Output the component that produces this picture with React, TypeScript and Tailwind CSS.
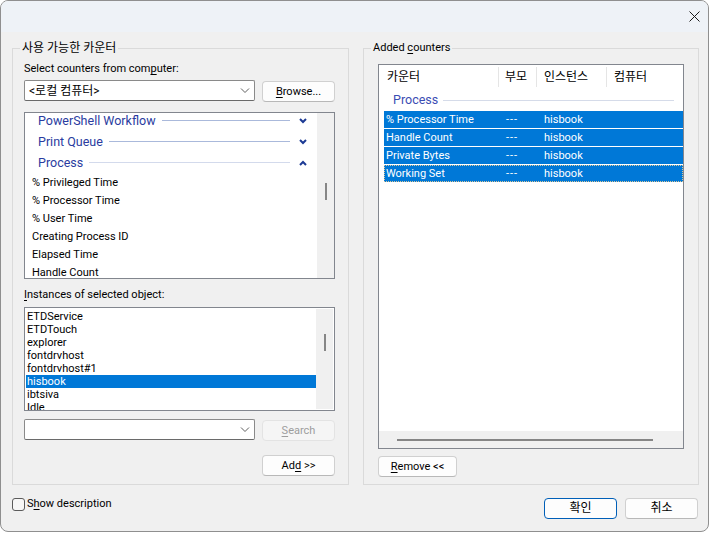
import type { ReactNode } from 'react';

const FONT = "font-['Roboto','Noto_Sans_CJK_KR',sans-serif]";

const GROUPS: Array<{ name: string; open: boolean }> = [
  { name: 'PowerShell Workflow', open: false },
  { name: 'Print Queue', open: false },
  { name: 'Process', open: true },
];

const COUNTERS = [
  '% Privileged Time',
  '% Processor Time',
  '% User Time',
  'Creating Process ID',
  'Elapsed Time',
  'Handle Count',
  'ID Process',
];

const INSTANCES = ['ETDService', 'ETDTouch', 'explorer', 'fontdrvhost', 'fontdrvhost#1', 'hisbook', 'ibtsiva', 'Idle'];

const ADDED = [
  { counter: '% Processor Time', parent: '---', instance: 'hisbook' },
  { counter: 'Handle Count', parent: '---', instance: 'hisbook' },
  { counter: 'Private Bytes', parent: '---', instance: 'hisbook' },
  { counter: 'Working Set', parent: '---', instance: 'hisbook' },
];

function U({ children }: { children: ReactNode }) {
  return <span className="underline underline-offset-[2px] decoration-[1px]">{children}</span>;
}

function DropChevron() {
  return (
    <svg width="10" height="6" viewBox="0 0 10 6" className="shrink-0">
      <polyline points="1,0.5 5,4.5 9,0.5" fill="none" stroke="#5f5f5f" strokeWidth="1" />
    </svg>
  );
}

function GroupChevron({ open }: { open: boolean }) {
  return (
    <svg width="8" height="6" viewBox="0 0 8 6" className="shrink-0">
      <polyline
        points={open ? '1,5 4,2 7,5' : '1,1 4,4 7,1'}
        fill="none"
        stroke="#1c3a94"
        strokeWidth="2"
      />
    </svg>
  );
}

function Combo({ text }: { text?: string }) {
  return (
    <div className="w-[231px] h-[21px] bg-white border border-[#8a8a8a] border-b-[#6a6a6a] rounded-[2px] flex items-center pl-[4px] pr-[4px]">
      <span className="flex-1 text-[12px] leading-[16px] text-black">{text}</span>
      <DropChevron />
    </div>
  );
}

function Button({
  children,
  width = 'w-[73px]',
  disabled,
  primary,
}: {
  children: ReactNode;
  width?: string;
  disabled?: boolean;
  primary?: boolean;
}) {
  return (
    <button
      type="button"
      className={`${width} h-[21px] rounded-[4px] border text-[11px] leading-[16px] flex items-center justify-center ${
        disabled
          ? 'bg-[#f5f5f5] border-[#e3e3e3] text-[#9d9d9d]'
          : primary
            ? 'bg-[#fdfdfd] border-[#005fb8] text-black'
            : 'bg-[#fdfdfd] border-[#d0d0d0] border-b-[#b8b8b8] text-black'
      }`}
    >
      <span>{children}</span>
    </button>
  );
}

function VScroll({ thumbTop }: { thumbTop: string }) {
  return (
    <div className="w-[17px] bg-[#f0f0f0] shrink-0 flex justify-center">
      <div className={`w-[2px] h-[17px] bg-[#868686] ${thumbTop}`} />
    </div>
  );
}

export default function App() {
  return (
    <div className={`w-[710px] h-[533px] bg-white text-[11px] ${FONT}`}>
      <div className="w-[709px] h-[532px] rounded-[8px] border border-[#8f8f8f] bg-[#f0f0f0] overflow-hidden flex flex-col">
        {/* 제목 표시줄 */}
        <div className="h-[31px] bg-[#eef2f7] flex items-center justify-end pr-[8px] shrink-0">
          <svg width="11" height="11" viewBox="0 0 11 11">
            <path d="M0.5 0.5 L10.5 10.5 M10.5 0.5 L0.5 10.5" stroke="#1b1b1b" strokeWidth="1" />
          </svg>
        </div>

        <div className="flex-1 pl-[11px] pr-[9px] pt-[8px]">
          <div className="flex gap-[14px]">
            {/* 사용 가능한 카운터 */}
            <fieldset className="w-[337px] h-[445px] border border-[#dadada] pl-[11px] pr-[13px]">
              <legend className="ml-[-4px] px-[2px] text-[12px] leading-[16px] text-black">사용 가능한 카운터</legend>

              <div className="mt-[5px] leading-[16px] text-black">
                Select counters from com<U>p</U>uter:
              </div>
              <div className="mt-[3px] flex gap-[7px] items-start">
                <Combo text="<로컬 컴퓨터>" />
                <div className="mt-[1px]">
                  <Button>
                    <U>B</U>rowse...
                  </Button>
                </div>
              </div>

              <div className="mt-[10px] h-[167px] border border-[#82868e] bg-white flex overflow-hidden">
                <div className="flex-1 mt-[-3px]">
                  {GROUPS.map((g) => (
                    <div key={g.name} className="h-[21px] flex items-center pl-[13px] pr-[10px]">
                      <span className="text-[12.5px] leading-[16px] text-[#2a3ca0]">{g.name}</span>
                      <div
                        className={`flex-1 h-px ml-[6px] mr-[9px] ${g.open ? 'bg-[#d3daec]' : 'bg-[#aab9db]'}`}
                      />
                      <GroupChevron open={g.open} />
                    </div>
                  ))}
                  <div className="mt-[1px]">
                    {COUNTERS.map((c) => (
                      <div key={c} className="h-[18px] flex items-center pl-[7px] leading-[16px] text-black">
                        {c}
                      </div>
                    ))}
                  </div>
                </div>
                <VScroll thumbTop="mt-[70px]" />
              </div>

              <div className="mt-[8px] leading-[16px] text-black">
                <U>I</U>nstances of selected object:
              </div>
              <div className="mt-[4px] h-[104px] border border-[#82868e] bg-white flex p-px overflow-hidden">
                <div className="flex-1 pt-px">
                  {INSTANCES.map((i) => (
                    <div
                      key={i}
                      className={`h-[13px] flex items-center pl-[1px] leading-[13px] ${
                        i === 'hisbook' ? 'bg-[#0078d7] text-white' : 'text-black'
                      }`}
                    >
                      {i}
                    </div>
                  ))}
                </div>
                <VScroll thumbTop="mt-[25px]" />
              </div>

              <div className="mt-[8px] h-[22px] flex gap-[7px] items-start">
                <Combo />
                <div className="mt-[1px]">
                  <Button disabled>
                    <U>S</U>earch
                  </Button>
                </div>
              </div>

              <div className="mt-[14px] flex justify-end">
                <Button>
                  Ad<U>d</U> &gt;&gt;
                </Button>
              </div>
            </fieldset>

            {/* Added counters */}
            <fieldset className="w-[336px] h-[445px] border border-[#dadada] pl-[14px] pr-[14px]">
              <legend className="ml-[-7px] px-[2px] leading-[16px] text-black">
                Added <U>c</U>ounters
              </legend>

              <div className="mt-[8px] h-[385px] border border-[#82868e] bg-white flex flex-col">
                <div className="h-[24px] flex items-stretch text-[12px] text-black shrink-0">
                  <div className="w-[120px] pl-[8px] flex items-center border-r border-[#e5e5e5] my-[2px]">카운터</div>
                  <div className="w-[38px] pl-[6px] flex items-center border-r border-[#e5e5e5] my-[2px]">부모</div>
                  <div className="w-[70px] pl-[7px] flex items-center border-r border-[#e5e5e5] my-[2px]">인스턴스</div>
                  <div className="flex-1 pl-[7px] flex items-center my-[2px]">컴퓨터</div>
                </div>
                <div className="h-[22px] flex items-center pl-[14px] pr-[9px] shrink-0">
                  <span className="text-[12.5px] leading-[16px] text-[#3b4db3]">Process</span>
                  <div className="flex-1 h-px ml-[5px] bg-[#d5dbe9]" />
                </div>
                <div className="pl-[5px] flex-1">
                  {ADDED.map((a, idx) => (
                    <div
                      key={a.counter}
                      className={`h-[17px] mb-px bg-[#0078d7] text-white leading-[16px] flex items-center ${
                        idx === ADDED.length - 1 ? 'outline-1 outline-dotted outline-[#d8c79a] -outline-offset-1' : ''
                      }`}
                    >
                      <span className="w-[122px] pl-[2px]">{a.counter}</span>
                      <span className="w-[38px] tracking-[1px]">{a.parent}</span>
                      <span>{a.instance}</span>
                    </div>
                  ))}
                </div>
                <div className="h-[17px] bg-[#f0f0f0] flex items-center pl-[18px] pr-[30px] shrink-0">
                  <div className="flex-1 h-[2px] bg-[#868686]" />
                </div>
              </div>

              <div className="mt-[7px]">
                <Button width="w-[79px]">
                  <U>R</U>emove &lt;&lt;
                </Button>
              </div>
            </fieldset>
          </div>

          <div className="flex items-start">
            <label className="mt-[11px] flex items-center gap-[2px] leading-[16px] text-black">
              <span className="w-[13px] h-[13px] rounded-[3px] border border-[#5b5b5b] bg-[#f7f7f7]" />
              <span>
                S<U>h</U>ow description
              </span>
            </label>
            <div className="ml-auto mt-[13px] mr-[1px] flex gap-[8px]">
              <Button primary>
                <span className="text-[12px]">확인</span>
              </Button>
              <Button>
                <span className="text-[12px]">취소</span>
              </Button>
            </div>
          </div>
        </div>
      </div>
    </div>
  );
}
